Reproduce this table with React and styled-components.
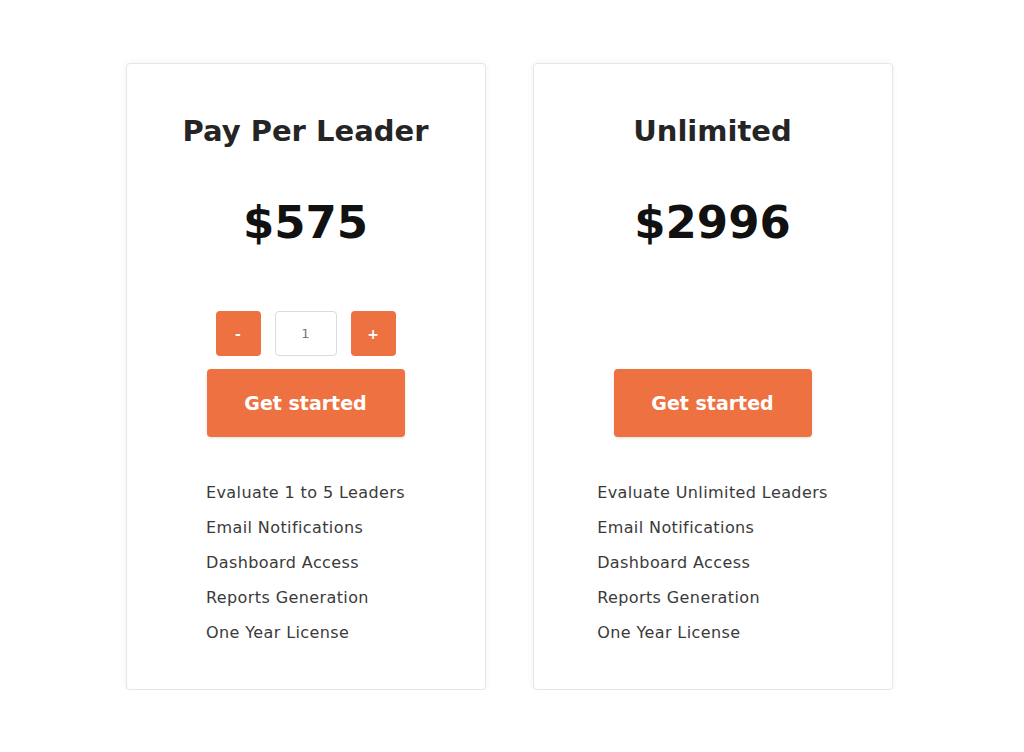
import React, { useState } from 'react';
import styled, { createGlobalStyle } from 'styled-components';

const GlobalStyle = createGlobalStyle`
  body {
    margin: 0;
    background: #fff;
    font-family: "DejaVu Sans", "Noto Sans", sans-serif;
  }
`;

const plans = [
  {
    name: 'Pay Per Leader',
    price: '$575',
    quantity: true,
    features: ['Evaluate 1 to 5 Leaders', 'Email Notifications', 'Dashboard Access', 'Reports Generation', 'One Year License'],
  },
  {
    name: 'Unlimited',
    price: '$2996',
    quantity: false,
    features: ['Evaluate Unlimited Leaders', 'Email Notifications', 'Dashboard Access', 'Reports Generation', 'One Year License'],
  },
];

const PlanCard = ({ plan }) => {
  const [qty, setQty] = useState(1);

  return (
    <Card>
      <Title>{plan.name}</Title>
      <Price>{plan.price}</Price>
      <Controls>
        {plan.quantity && (
          <>
            <QtyButton onClick={() => setQty(Math.max(1, qty - 1))}>-</QtyButton>
            <QtyInput value={qty} readOnly />
            <QtyButton onClick={() => setQty(qty + 1)}>+</QtyButton>
          </>
        )}
      </Controls>
      <StartButton>Get started</StartButton>
      <Features>
        {plan.features.map(f => (
          <li key={f}>{f}</li>
        ))}
      </Features>
    </Card>
  );
};

const App = () => {
  return (
    <>
      <GlobalStyle />
      <Page>
        {plans.map(p => (
          <PlanCard key={p.name} plan={p} />
        ))}
      </Page>
    </>
  );
};

export default App;

const Page = styled.div`
display:flex;
justify-content:center;
gap:47px;
padding:63px 6px 0 0;
`;

const Card = styled.div`
width:360px;
box-sizing:border-box;
padding:50px 0 39px;
display:flex;
flex-direction:column;
align-items:center;
background:#fff;
border:1px solid #e6e6e6;
border-radius:4px;
box-shadow:0 0 6px rgba(0,0,0,0.06);
`;

const Title = styled.h2`
margin:0;
font-size:29px;
line-height:34px;
font-weight:bold;
color:#252525;
`;

const Price = styled.div`
margin-top:46px;
font-size:45px;
line-height:58px;
font-weight:bold;
color:#111;
`;

const Controls = styled.div`
margin-top:59px;
height:45px;
display:flex;
gap:14px;
`;

const QtyButton = styled.button`
width:45px;
height:45px;
border:none;
border-radius:4px;
background:#ee7141;
color:#fff;
font-family:inherit;
font-size:14px;
font-weight:bold;
padding:0;
cursor:pointer;
`;

const QtyInput = styled.input`
width:62px;
height:45px;
box-sizing:border-box;
border:1px solid #dcdcdc;
border-radius:4px;
text-align:center;
font-family:inherit;
font-size:13px;
color:#777;
outline:none;
`;

const StartButton = styled.button`
margin-top:13px;
width:198px;
height:68px;
border:none;
border-radius:4px;
background:#ee7141;
color:#fff;
font-family:inherit;
font-size:19px;
font-weight:bold;
box-shadow:0 1px 3px rgba(0,0,0,0.12);
cursor:pointer;
`;

const Features = styled.ul`
margin:38px 0 0;
padding:0;
list-style:none;
li{
    font-size:16px;
    line-height:35px;
    letter-spacing:0.4px;
    color:#3a3a3a;
}
`;
